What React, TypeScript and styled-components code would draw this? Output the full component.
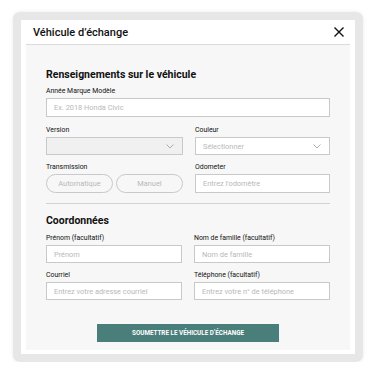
import React from 'react'
import styled, { createGlobalStyle } from 'styled-components'

const GlobalStyle = createGlobalStyle`
  html, body {
    margin: 0;
    padding: 0;
    background: #ffffff;
    font-family: Roboto, "Liberation Sans", Arial, sans-serif;
  }
`

const Frame = styled.div`
  margin: 12px 0 0 13px;
  width: 350px;
  height: 350px;
  box-sizing: border-box;
  padding: 8px;
  background: #e7e7e7;
  border-radius: 7px;
  box-shadow: 0 0 4px rgba(0, 0, 0, 0.08);
`

const Panel = styled.div`
  height: 100%;
  box-sizing: border-box;
  background: #ffffff;
  padding: 0 5px 4px;
  display: flex;
  flex-direction: column;
`

const Header = styled.div`
  height: 25px;
  box-sizing: border-box;
  padding: 0 5px 0 7px;
  display: flex;
  align-items: center;
  justify-content: space-between;
  border-bottom: 1px solid #dcdcdc;
`

const Title = styled.div`
  font-size: 11px;
  font-weight: 500;
  color: #111;
`

const CloseButton = styled.button`
  border: none;
  background: none;
  padding: 0;
  width: 12px;
  height: 12px;
  display: flex;
  cursor: pointer;
`

const Body = styled.div`
  flex: 1;
  background: #f7f7f7;
  padding: 23px 20px 0;
  display: flex;
  flex-direction: column;
`

const SectionTitle = styled.h2<{ $top?: number }>`
  margin: ${p => p.$top ?? 0}px 0 0;
  font-size: 10.5px;
  line-height: 14px;
  font-weight: 700;
  color: #111;
`

const Grid = styled.div<{ $top: number }>`
  display: grid;
  grid-template-columns: 1fr 1fr;
  column-gap: 12px;
  row-gap: 8px;
  margin-top: ${p => p.$top}px;
`

const Field = styled.div<{ $wide?: boolean }>`
  display: flex;
  flex-direction: column;
  gap: 3px;
  grid-column: ${p => (p.$wide ? '1 / 3' : 'auto')};
`

const Label = styled.label`
  font-size: 6.9px;
  line-height: 8px;
  color: #111;
  white-space: nowrap;
`

const Input = styled.input<{ $h?: number }>`
  box-sizing: border-box;
  height: ${p => p.$h ?? 18}px;
  width: 100%;
  border: 1px solid #c9c9c9;
  background: #ffffff;
  padding: 0 7px;
  font-family: inherit;
  font-size: 7.4px;
  color: #333;
  outline: none;
  &::placeholder {
    color: #b8b8b8;
  }
`

const SelectBox = styled.div<{ $disabled?: boolean }>`
  box-sizing: border-box;
  height: 18px;
  border: 1px solid #c9c9c9;
  background: ${p => (p.$disabled ? '#f0f0f0' : '#ffffff')};
  padding: 0 8px 0 7px;
  display: flex;
  align-items: center;
  justify-content: space-between;
  font-size: 7.4px;
  color: #b8b8b8;
`

const Pills = styled.div`
  display: flex;
  gap: 3px;
`

const Pill = styled.button`
  box-sizing: border-box;
  width: 67px;
  height: 19px;
  border: 1px solid #c9c9c9;
  border-radius: 10px;
  background: #f7f7f7;
  font-family: inherit;
  font-size: 7.4px;
  color: #b8b8b8;
  padding: 0;
`

const Divider = styled.hr`
  margin: 10px 0 0;
  border: none;
  border-top: 1px solid #d2d2d2;
`

const Submit = styled.button`
  align-self: center;
  margin-top: 24px;
  width: 182px;
  height: 18px;
  border: none;
  background: #4a7e7a;
  color: #ffffff;
  font-family: inherit;
  font-size: 6.3px;
  font-weight: 700;
  text-transform: uppercase;
  cursor: pointer;
`

const Chevron = () => (
  <svg width="8" height="5" viewBox="0 0 8 5">
    <path d="M0.5 0.5 L4 4 L7.5 0.5" fill="none" stroke="#9a9a9a" strokeWidth="0.8" />
  </svg>
)

const CloseIcon = () => (
  <svg width="12" height="12" viewBox="0 0 12 12">
    <path d="M1.5 1.5 L10.5 10.5 M10.5 1.5 L1.5 10.5" stroke="#111" strokeWidth="1.4" />
  </svg>
)

export default function App() {
  return (
    <>
      <GlobalStyle />
      <Frame>
        <Panel>
          <Header>
            <Title>Véhicule d’échange</Title>
            <CloseButton aria-label="Fermer">
              <CloseIcon />
            </CloseButton>
          </Header>
          <Body>
            <SectionTitle>Renseignements sur le véhicule</SectionTitle>
            <Grid $top={5}>
              <Field $wide style={{ marginBottom: 1 }}>
                <Label>Année Marque Modèle</Label>
                <Input $h={19} placeholder="Ex. 2018 Honda Civic" />
              </Field>
              <Field>
                <Label>Version</Label>
                <SelectBox $disabled>
                  <span />
                  <Chevron />
                </SelectBox>
              </Field>
              <Field>
                <Label>Couleur</Label>
                <SelectBox>
                  <span>Sélectionner</span>
                  <Chevron />
                </SelectBox>
              </Field>
              <Field>
                <Label>Transmission</Label>
                <Pills>
                  <Pill>Automatique</Pill>
                  <Pill>Manuel</Pill>
                </Pills>
              </Field>
              <Field>
                <Label>Odometer</Label>
                <Input $h={19} placeholder="Entrez l'odomètre" />
              </Field>
            </Grid>
            <Divider />
            <SectionTitle $top={10}>Coordonnées</SectionTitle>
            <Grid $top={6}>
              <Field>
                <Label>Prénom (facultatif)</Label>
                <Input placeholder="Prénom" />
              </Field>
              <Field>
                <Label>Nom de famille (facultatif)</Label>
                <Input placeholder="Nom de famille" />
              </Field>
              <Field>
                <Label>Courriel</Label>
                <Input placeholder="Entrez votre adresse courriel" />
              </Field>
              <Field>
                <Label>Téléphone (facultatif)</Label>
                <Input placeholder="Entrez votre n° de téléphone" />
              </Field>
            </Grid>
            <Submit>Soumettre le véhicule d’échange</Submit>
          </Body>
        </Panel>
      </Frame>
    </>
  )
}
